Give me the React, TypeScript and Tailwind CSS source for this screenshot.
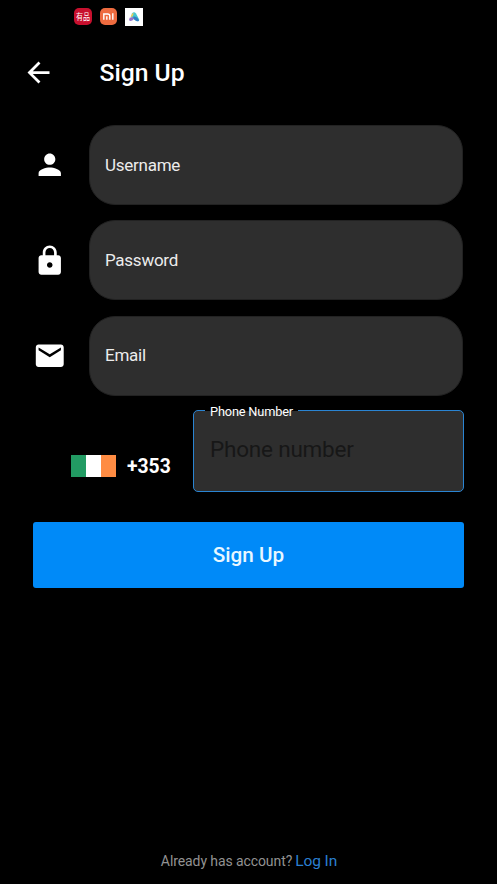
import { MdArrowBack, MdEmail, MdLock, MdPerson } from "react-icons/md";
import type { ReactNode } from "react";

function Field({ icon, label }: { icon: ReactNode; label: string }) {
  return (
    <div className="flex h-20 items-center">
      <div className="flex w-14 items-center">{icon}</div>
      <div className="flex h-20 w-[374px] items-center rounded-[26px] border border-[#222222] bg-[#2e2e2e] pl-[15px] text-[17px] tracking-[-0.26px] text-[#ececec]">
        <span className="pt-px">{label}</span>
      </div>
    </div>
  );
}

function StatusIcons() {
  return (
    <div className="flex h-8 items-center gap-2 pl-[74px] pt-px">
      <div className="flex h-[17px] w-[18px] items-center justify-center rounded-[5px] bg-[#c8102e] font-['Noto_Sans_CJK_SC',sans-serif] text-[7px] leading-none text-white">
        <span className="scale-y-125">有品</span>
      </div>
      <div className="flex h-[17px] w-[17px] items-center justify-center rounded-[5px] bg-[#ee6b3f]">
        <svg viewBox="0 0 17 17" className="h-[17px] w-[17px]" fill="none" stroke="#fff" strokeWidth="1.4">
          <path d="M3.8 11.8V6H7.6Q9.8 6 9.8 8V11.8M6.8 8.2V11.8M12.8 5.3V11.8" />
        </svg>
      </div>
      <svg viewBox="0 0 18 18" className="h-[18px] w-[18px]">
        <path fill="#fff" d="M0 0H18V18H0Z" />
        <path fill="#45c8cf" d="M7 5.4Q9 3 11 5.4L14.2 11.5Q14.5 13.2 12.8 13.2L10.5 12.5 6 9Z" />
        <path fill="#347fc5" d="M8.4 8.6Q11 8 12.5 10L14 12.4Q13 14 11 12.7L8 10.4Z" />
        <path fill="#9671c9" d="M4.7 9.8Q7.5 8.5 9 10.7 7.3 13.3 4.8 13 3.4 12 4.7 9.8Z" />
        <path fill="#f2cc55" d="M7.2 5.4 8.8 5.2 7.6 8.5 5.5 8.7Z" />
      </svg>
    </div>
  );
}

export default function App() {
  return (
    <div className="h-[889px] w-[501px] overflow-hidden bg-white font-[Roboto,sans-serif]">
      <main className="flex h-[884px] w-[497px] flex-col bg-black">
        <StatusIcons />
        <header className="flex h-20 items-center pl-[22px]">
          <MdArrowBack className="size-[33px] text-white" />
          <h1 className="ml-[44.5px] pt-px text-[24.7px] font-medium text-white">Sign Up</h1>
        </header>
        <form className="flex flex-col pl-[33px] pt-[13px]">
          <div className="flex flex-col gap-[15.3px]">
            <Field label="Username" icon={<MdPerson className="size-[33.5px] text-white" />} />
            <Field label="Password" icon={<MdLock className="size-[33.5px] text-white" />} />
            <Field label="Email" icon={<MdEmail className="size-[33.5px] text-white" />} />
          </div>
          <div className="mt-[14.4px] flex h-[82px] w-[431px]">
            <div className="flex w-40 items-center pl-[38px] pt-[31px]">
              <div className="flex h-[22px] w-[45px]">
                <span className="flex-1 bg-[#229b63]" />
                <span className="flex-1 bg-white" />
                <span className="flex-1 bg-[#ff8c43]" />
              </div>
              <span className="ml-[11px] pt-[2px] text-[19.3px] font-bold text-white">+353</span>
            </div>
            <div className="relative flex h-[82px] flex-1 items-center rounded-[5px] border border-[#2a84d2] bg-[#2e2e2e] pl-4 text-[22.5px] tracking-[-0.2px] text-[#171717]">
              <span className="absolute -top-px left-[11px] h-1 w-[93px] bg-[#2e2e2e]" />
              <span className="absolute -top-px left-[11px] h-px w-[93px] bg-black" />
              <span className="absolute -top-[7px] left-4 text-[12.8px] leading-4 tracking-[-0.18px] text-white">Phone Number</span>
              <span className="-mt-[3px]">Phone number</span>
            </div>
          </div>
          <button type="button" className="mt-[30px] h-[66px] w-[431px] rounded-[3px] bg-[#008af8] pt-[2px] text-[20.7px] font-medium text-[#e8f7ff]">
            Sign Up
          </button>
        </form>
        <footer className="mt-auto flex items-baseline justify-center gap-[3px] pb-[11px] pl-px text-[14px] tracking-[-0.09px] text-[#929292]">
          <span>Already has account?</span>
          <span className="text-[15.5px] text-[#2b7fd0]">Log In</span>
        </footer>
      </main>
    </div>
  );
}
